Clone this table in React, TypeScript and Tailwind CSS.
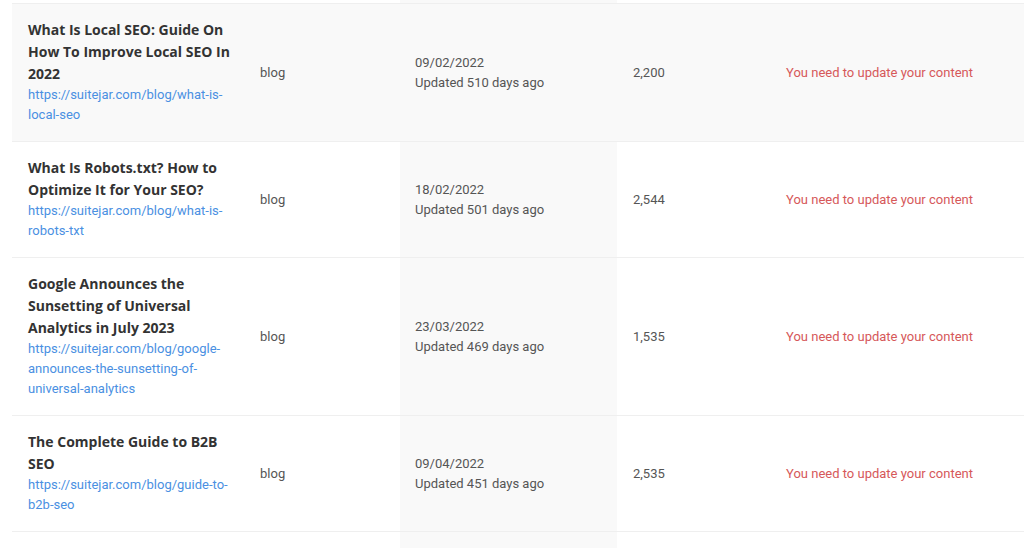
import React from "react";

type Row = { title: string; url: string; date: string; ago: string; words: string; gray?: boolean };

const rows: Row[] = [
  {
    title: "What Is Local SEO: Guide On How To Improve Local SEO In 2022",
    url: "https://suitejar.com/blog/what-is-local-seo",
    date: "09/02/2022",
    ago: "Updated 510 days ago",
    words: "2,200",
    gray: true,
  },
  {
    title: "What Is Robots.txt? How to Optimize It for Your SEO?",
    url: "https://suitejar.com/blog/what-is-robots-txt",
    date: "18/02/2022",
    ago: "Updated 501 days ago",
    words: "2,544",
  },
  {
    title: "Google Announces the Sunsetting of Universal Analytics in July 2023",
    url: "https://suitejar.com/blog/google-announces-the-sunsetting-of-universal-analytics",
    date: "23/03/2022",
    ago: "Updated 469 days ago",
    words: "1,535",
  },
  {
    title: "The Complete Guide to B2B SEO",
    url: "https://suitejar.com/blog/guide-to-b2b-seo",
    date: "09/04/2022",
    ago: "Updated 451 days ago",
    words: "2,535",
  },
];

export default function App() {
  return (
    <div
      className="w-[1024px] h-[548px] overflow-hidden bg-white pl-[12px]"
      style={{ fontFamily: "Roboto, 'Liberation Sans', sans-serif" }}
    >
      <div className="flex h-[4px] border-b border-[#efefef]">
        <div className="w-[388px]" />
        <div className="w-[217px] bg-[#f9f9f9]" />
      </div>
      {rows.map((r, i) => (
        <div
          key={i}
          className={`flex items-stretch border-b border-[#efefef] ${r.gray ? "bg-[#f9f9f9]" : "bg-white"}`}
        >
          <div className="w-[232px] pl-[16px] pt-[15px] pb-[16px]">
            <div
              className="w-[210px] text-[14px] leading-[22px] font-bold text-[#333333]"
              style={{ fontFamily: "'Open Sans', 'Noto Sans', sans-serif" }}
            >
              {r.title}
            </div>
            <div className="w-[210px] text-[13px] leading-[20px] text-[#4a90e2] break-words">{r.url}</div>
          </div>
          <div className="w-[156px] pl-[16px] flex items-center text-[13px] text-[#555555]">blog</div>
          <div className="w-[217px] pl-[15px] flex flex-col justify-center bg-[#f9f9f9] text-[13px] leading-[20px] text-[#555555]">
            <div>{r.date}</div>
            <div>{r.ago}</div>
          </div>
          <div className="w-[153px] pl-[16px] flex items-center text-[13px] text-[#555555]">{r.words}</div>
          <div className="flex-1 pl-[16px] flex items-center text-[13px] text-[#d6585a]">
            You need to update your content
          </div>
        </div>
      ))}
      <div className="flex h-[40px]">
        <div className="w-[388px]" />
        <div className="w-[217px] bg-[#f9f9f9]" />
      </div>
    </div>
  );
}
